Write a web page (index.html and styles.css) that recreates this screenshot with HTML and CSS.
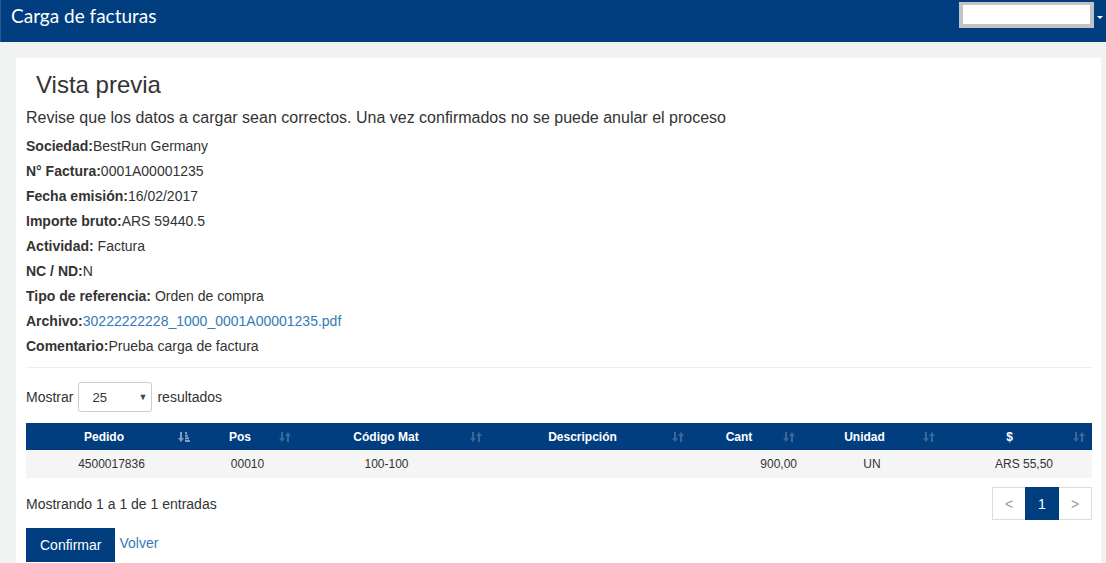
FILE: index.html
```html
<!DOCTYPE html>
<html lang="es">
<head>
<meta charset="utf-8">
<title>Carga de facturas</title>
<link rel="stylesheet" href="styles.css">
</head>
<body>
<header class="topbar">
  <div class="brand">Carga de facturas</div>
  <div class="user">
    <div class="user-box"></div>
    <span class="caret"></span>
  </div>
</header>
<main class="page">
  <section class="card">
    <h3 class="title">Vista previa</h3>
    <p class="lead">Revise que los datos a cargar sean correctos. Una vez confirmados no se puede anular el proceso</p>
    <div class="fields">
      <div class="field"><b>Sociedad:</b>BestRun Germany</div>
      <div class="field"><b>N° Factura:</b>0001A00001235</div>
      <div class="field"><b>Fecha emisión:</b>16/02/2017</div>
      <div class="field"><b>Importe bruto:</b>ARS 59440.5</div>
      <div class="field"><b>Actividad:</b> Factura</div>
      <div class="field"><b>NC / ND:</b>N</div>
      <div class="field"><b>Tipo de referencia:</b> Orden de compra</div>
      <div class="field"><b>Archivo:</b><a class="link" href="#">30222222228_1000_0001A00001235.pdf</a></div>
      <div class="field"><b>Comentario:</b>Prueba carga de factura</div>
    </div>
    <hr class="divider">
    <div class="length">
      <span>Mostrar</span>
      <div class="select"><span>25</span><span class="sel-arrow">▼</span></div>
      <span>resultados</span>
    </div>
    <table class="grid">
      <colgroup>
        <col class="c1"><col class="c2"><col class="c3"><col class="c4"><col class="c5"><col class="c6"><col class="c7">
      </colgroup>
      <thead>
        <tr>
          <th><div class="th-in"><span class="th-label">Pedido</span><svg class="sort active" viewBox="0 0 12 10"><path d="M2 0h2v6h2L3 10 0 6h2z"/><rect x="7" y="0" width="2" height="2"/><rect x="7" y="2.7" width="3" height="2"/><rect x="7" y="5.4" width="4" height="2"/><rect x="7" y="8" width="5" height="2"/></svg></div></th>
          <th><div class="th-in"><span class="th-label">Pos</span><svg class="sort" viewBox="0 0 12 10"><path d="M2 0h2v6h2L3 10 0 6h2z"/><path d="M8 10h2V4h2L9 0 6 4h2z"/></svg></div></th>
          <th><div class="th-in"><span class="th-label">Código Mat</span><svg class="sort" viewBox="0 0 12 10"><path d="M2 0h2v6h2L3 10 0 6h2z"/><path d="M8 10h2V4h2L9 0 6 4h2z"/></svg></div></th>
          <th><div class="th-in"><span class="th-label">Descripción</span><svg class="sort" viewBox="0 0 12 10"><path d="M2 0h2v6h2L3 10 0 6h2z"/><path d="M8 10h2V4h2L9 0 6 4h2z"/></svg></div></th>
          <th><div class="th-in"><span class="th-label">Cant</span><svg class="sort" viewBox="0 0 12 10"><path d="M2 0h2v6h2L3 10 0 6h2z"/><path d="M8 10h2V4h2L9 0 6 4h2z"/></svg></div></th>
          <th><div class="th-in"><span class="th-label">Unidad</span><svg class="sort" viewBox="0 0 12 10"><path d="M2 0h2v6h2L3 10 0 6h2z"/><path d="M8 10h2V4h2L9 0 6 4h2z"/></svg></div></th>
          <th><div class="th-in"><span class="th-label">$</span><svg class="sort" viewBox="0 0 12 10"><path d="M2 0h2v6h2L3 10 0 6h2z"/><path d="M8 10h2V4h2L9 0 6 4h2z"/></svg></div></th>
        </tr>
      </thead>
      <tbody>
        <tr>
          <td>4500017836</td>
          <td>00010</td>
          <td class="code">100-100</td>
          <td></td>
          <td class="num">900,00</td>
          <td>UN</td>
          <td class="money">ARS 55,50</td>
        </tr>
      </tbody>
    </table>
    <div class="info-row">
      <span class="info">Mostrando 1 a 1 de 1 entradas</span>
      <nav class="pager">
        <span class="pg">&lt;</span>
        <span class="pg current">1</span>
        <span class="pg">&gt;</span>
      </nav>
    </div>
    <div class="actions">
      <button class="btn-primary" type="button">Confirmar</button>
      <a class="link back" href="#">Volver</a>
    </div>
  </section>
</main>
</body>
</html>
```

FILE: styles.css
```css
html, body {
  margin: 0;
  padding: 0;
  overflow: hidden;
}
body {
  background: #f1f3f2;
  font-family: "Liberation Sans", Arial, sans-serif;
  font-size: 14px;
  color: #333;
  height: 563px;
}
.topbar {
  height: 42px;
  background: #003e7f;
  display: flex;
  justify-content: space-between;
  align-items: flex-start;
  border-left: 1px solid #2a5a8c;
}
.brand {
  color: #fff;
  font-family: "Lato", "Open Sans", sans-serif;
  font-size: 19px;
  line-height: 20px;
  padding: 6px 0 0 10px;
}
.user {
  display: flex;
  align-items: flex-start;
  padding-right: 3px;
}
.user-box {
  box-sizing: border-box;
  width: 135px;
  height: 26px;
  margin-top: 2px;
  background: #fff;
  border: 4px solid #c3c3c3;
  border-top-width: 3px;
}
.caret {
  width: 0;
  height: 0;
  margin: 16px 0 0 3px;
  border-left: 3px solid transparent;
  border-right: 3px solid transparent;
  border-top: 3px solid #fff;
}
.page {
  padding-top: 16px;
}
.card {
  background: #fff;
  margin: 0 5px 0 16px;
  padding: 0 9px 40px 10px;
}
.title {
  margin: 0 0 0 10px;
  padding-top: 14px;
  font-size: 24px;
  line-height: 26px;
  font-weight: normal;
  color: #333;
}
.lead {
  margin: 9px 0 7px;
  font-size: 16px;
  line-height: 22px;
}
.field {
  line-height: 20px;
  margin-bottom: 5px;
}
.field b {
  font-weight: bold;
}
.link {
  color: #337ab7;
  text-decoration: none;
}
.divider {
  border: 0;
  border-top: 1px solid #eee;
  margin: 11px 0 0;
  height: 0;
}
.length {
  display: flex;
  align-items: center;
  margin-top: 14px;
  height: 30px;
}
.select {
  box-sizing: border-box;
  width: 74px;
  height: 30px;
  margin: 0 5px 0 5px;
  border: 1px solid #ccc;
  border-radius: 3px;
  display: flex;
  align-items: center;
  justify-content: space-between;
  padding: 0 4px 0 13px;
  font-size: 13px;
}
.sel-arrow {
  font-size: 9px;
  color: #444;
}
.grid {
  margin-top: 11px;
  width: 1066px;
  border-collapse: collapse;
  table-layout: fixed;
  font-size: 12px;
}
.c1 { width: 171px; }
.c2 { width: 101px; }
.c3 { width: 191px; }
.c4 { width: 202px; }
.c5 { width: 111px; }
.c6 { width: 140px; }
.c7 { width: 150px; }
.grid th {
  background: #003e7f;
  color: #fff;
  height: 27px;
  padding: 0 7px 0 12px;
  font-weight: bold;
}
.th-in {
  display: flex;
  align-items: center;
}
.th-label {
  flex: 1;
  text-align: center;
  padding-right: 8px;
}
.sort {
  width: 12px;
  height: 10px;
  fill: #fff;
  opacity: 0.22;
  flex: none;
}
.sort.active {
  opacity: 0.5;
}
.grid td {
  background: #f5f5f5;
  height: 28px;
  padding: 0 8px;
  text-align: center;
  color: #333;
}
.grid td.num {
  text-align: right;
  padding-right: 5px;
}
.grid td.code {
  padding-right: 22px;
}
.grid td.money {
  padding-left: 22px;
}
.info-row {
  margin-top: 9px;
  display: flex;
  justify-content: space-between;
  align-items: center;
  height: 33px;
}
.pager {
  display: flex;
}
.pg {
  box-sizing: border-box;
  width: 34px;
  height: 33px;
  border: 1px solid #ddd;
  margin-left: -1px;
  display: flex;
  align-items: center;
  justify-content: center;
  color: #999;
  font-size: 14px;
}
.pg.current {
  background: #003e7f;
  border-color: #003e7f;
  color: #fff;
  position: relative;
}
.actions {
  margin-top: 8px;
  display: flex;
  align-items: flex-start;
}
.btn-primary {
  height: 34px;
  padding: 0 14px;
  background: #003e7f;
  color: #fff;
  border: 0;
  font-family: "Liberation Sans", Arial, sans-serif;
  font-size: 14px;
}
.back {
  margin: 5px 0 0 4px;
  line-height: 20px;
}
```
